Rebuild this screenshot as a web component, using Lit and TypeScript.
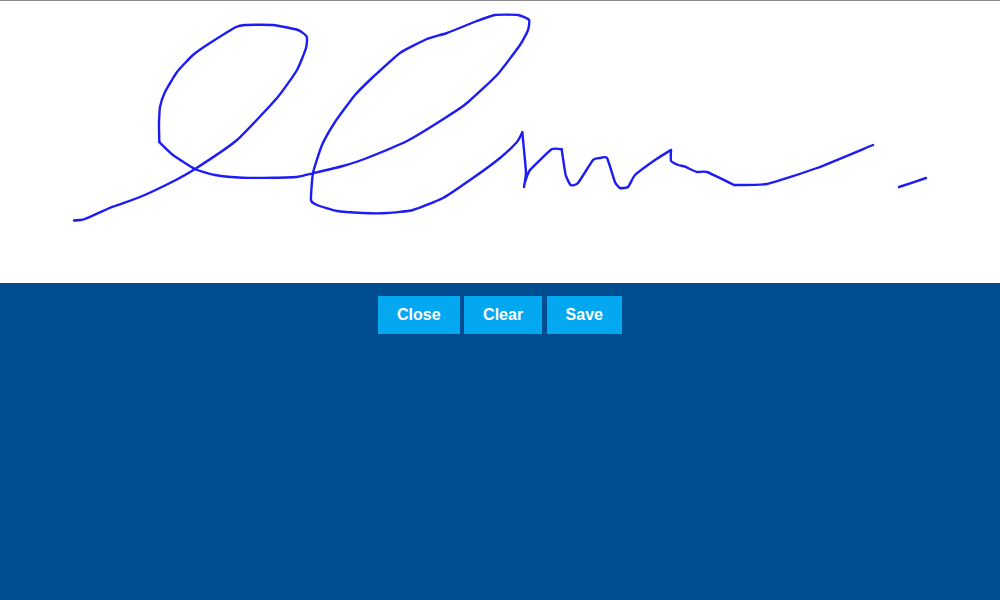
import { LitElement, html, css, svg } from "lit";
import { customElement } from "lit/decorators.js";

type P = [number, number];

const STROKES: P[][] = [
  [[74,220.5],[80,220],[85,219],[113,206.7],[140,197],[170,183],[195,169],[237,140],[277,98],[297,70],[306,48],[306.7,36.7],[298,30],[273,25],[245,25],[236,27],[210,43],[193,55],[177,72],[165,92],[160,107],[159,123],[159.3,142]],
  [[159.3,142],[173,155],[195,169],[215,175],[243,177.7],[273,177.7],[298,176.7],[313,173.3],[343,166],[367,158],[407,141],[445,118],[467,103],[497,75],[520,45],[528,30],[529,20],[518,15],[495,15],[477,21],[447,33],[427,39],[400,53],[372,78],[355,95],[335,122],[322,145],[313,173],[311,200],[317,205],[337,211],[363,213],[387,213],[413,210],[443,198],[470,180],[500,158],[517,142],[522.3,132.3]],
  [[522.3,132.3],[524,150],[526,173],[524,187]],
  [[525,182],[530,170],[551.7,149.3],[561.7,149.3]],
  [[561.7,149.3],[565.7,175],[570.7,185],[578,183],[593,160],[600,158],[607,158],[615,182],[620,188],[628,187],[635,175],[655,160],[671,150]],
  [[671,150],[671,160.7],[678,165],[685,166.7],[697,172],[707,172],[734,185]],
  [[734,185],[767,184],[817,168],[873,145]],
  [[899,187],[926,178]],
];

/** Light rounding only: the captured ink is a nearly straight-segment trace. */
function smooth(pts: P[]): string {
  const k = 12;
  let d = `M${pts[0][0]} ${pts[0][1]}`;
  for (let i = 0; i < pts.length - 1; i++) {
    const p0 = pts[Math.max(0, i - 1)];
    const p1 = pts[i];
    const p2 = pts[i + 1];
    const p3 = pts[Math.min(pts.length - 1, i + 2)];
    const c1x = p1[0] + (p2[0] - p0[0]) / k;
    const c1y = p1[1] + (p2[1] - p0[1]) / k;
    const c2x = p2[0] - (p3[0] - p1[0]) / k;
    const c2y = p2[1] - (p3[1] - p1[1]) / k;
    d += `C${c1x.toFixed(1)} ${c1y.toFixed(1)} ${c2x.toFixed(1)} ${c2y.toFixed(1)} ${p2[0]} ${p2[1]}`;
  }
  return d;
}

@customElement("app-root")
export class AppRoot extends LitElement {
  static styles = css`
    :host {
      display: block;
      width: 1000px;
      height: 600px;
      background: #004e91;
      font-family: "Liberation Sans", Arial, sans-serif;
    }
    .pad {
      display: block;
      width: 1000px;
      height: 282px;
      background: #fff;
      border-top: 1px solid #8a8a8a;
    }
    .ink {
      fill: none;
      stroke: #1c1cf5;
      stroke-width: 2.4;
      stroke-linecap: round;
      stroke-linejoin: round;
    }
    .actions {
      display: flex;
      justify-content: center;
      gap: 4.5px;
      padding-top: 13px;
    }
    button {
      height: 37.5px;
      padding: 0 19px;
      border: none;
      border-radius: 0;
      background: #03a8f0;
      color: #fff;
      font: bold 16px "Liberation Sans", Arial, sans-serif;
    }
  `;

  render() {
    return html`
      <svg class="pad" viewBox="0 1 1000 282" aria-label="Signature">
        ${STROKES.map((s) => svg`<path class="ink" d=${smooth(s)}></path>`)}
      </svg>
      <div class="actions">
        <button>Close</button>
        <button>Clear</button>
        <button>Save</button>
      </div>
    `;
  }
}
